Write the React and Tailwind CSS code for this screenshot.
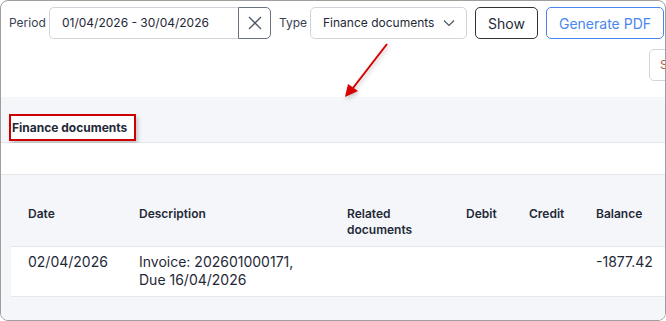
export default function App() {
  return (
    <div
      className="w-[666px] h-[321px] bg-white relative"
      style={{ fontFamily: "Inter, 'Noto Sans', sans-serif" }}
    >
      <div className="absolute inset-0 border border-[#9e9e9e] rounded-[8px] overflow-hidden flex flex-col text-[#1f2937]">
        {/* toolbar */}
        <div className="h-[96px] shrink-0 pt-[6px] pl-[8px] relative">
          <div className="flex items-center h-[32px] whitespace-nowrap">
            <span className="text-[12px] text-[#374151] w-[40px]">Period</span>
            <div className="flex h-[32px] w-[222px] ml-0">
              <div className="flex-1 border border-[#d1d5db] border-r-0 rounded-l-[5px] flex items-center pl-[12px] text-[12px] text-[#1f2937]">
                01/04/2026 - 30/04/2026
              </div>
              <div className="w-[33px] border border-[#6b7280] rounded-r-[5px] flex items-center justify-center">
                <svg width="16" height="16" viewBox="0 0 16 16" fill="none" stroke="#4b5563" strokeWidth="1.3">
                  <path d="M2 2 L14 14 M14 2 L2 14" />
                </svg>
              </div>
            </div>
            <span className="text-[12px] text-[#374151] ml-[8px] w-[31px]">Type</span>
            <div className="h-[32px] w-[157px] border border-[#d1d5db] rounded-[5px] flex items-center pl-[12px] pr-[10px] justify-between text-[12px]">
              <span>Finance documents</span>
              <svg width="14" height="14" viewBox="0 0 14 14" fill="none" stroke="#4b5563" strokeWidth="1.2">
                <path d="M2 4.5 L7 9.5 L12 4.5" />
              </svg>
            </div>
            <div className="ml-[8px] h-[32px] w-[63px] border border-[#333] rounded-[5px] flex items-center justify-center text-[14px] text-[#1f2937]">
              Show
            </div>
            <div className="ml-[8px] h-[32px] w-[118px] border border-[#4a86f0] rounded-[5px] flex items-center justify-center text-[14px] text-[#4a86f0]">
              Generate PDF
            </div>
          </div>
          <div className="flex justify-end mt-[10px] mr-[-16px]">
            <div className="h-[32px] w-[32px] border border-[#d1d5db] rounded-[5px] flex items-center pl-[10px] text-[12px] text-[#b45f3c]">
              S
            </div>
          </div>
        </div>

        {/* section heading */}
        <div className="h-[46px] shrink-0 bg-[#f5f6fa] border-b border-[#e5e7eb] pt-[17px] pl-[8px]">
          <div className="w-[127px] h-[27px] border-2 border-[#cc0000] bg-white flex items-center pl-[1px] text-[12px] font-bold text-[#1f2937] shadow-[2px_3px_4px_rgba(0,0,0,0.2)]">
            Finance documents
          </div>
        </div>

        <div className="h-[32px] shrink-0 bg-white border-b border-[#e5e7eb]" />

        {/* table */}
        <div className="flex-1 bg-[#f5f6fa] pl-[10px]">
          <div className="grid grid-cols-[111px_208px_119px_63px_67px_1fr] text-[12px] font-semibold leading-[16px] text-[#1f2937] pt-[31px] pb-[8px]">
            <div className="pl-[17px]">Date</div>
            <div className="pl-[17px]">Description</div>
            <div className="pl-[17px]">Related<br />documents</div>
            <div className="pl-[17px]">Debit</div>
            <div className="pl-[17px]">Credit</div>
            <div className="pl-[17px]">Balance</div>
          </div>
          <div className="grid grid-cols-[111px_208px_119px_63px_67px_1fr] bg-white border-y border-[#e5e7eb] text-[14px] leading-[18px] text-[#1f2937] pt-[6px] pb-[7px]">
            <div className="pl-[17px]">02/04/2026</div>
            <div className="pl-[17px]">Invoice: 202601000171,<br />Due 16/04/2026</div>
            <div className="pl-[17px]"></div>
            <div className="pl-[17px]"></div>
            <div className="pl-[17px]"></div>
            <div className="pl-[17px]">-1877.42</div>
          </div>
        </div>

        {/* annotation arrow */}
        <svg className="absolute left-0 top-0 pointer-events-none" width="666" height="321" style={{ filter: "drop-shadow(1px 2px 2px rgba(0,0,0,0.25))" }}>
          <line x1="386" y1="43" x2="352" y2="87" stroke="#d80000" strokeWidth="2" />
          <polygon points="344,96 347,83 357,90" fill="#d80000" />
        </svg>
      </div>
    </div>
  );
}
